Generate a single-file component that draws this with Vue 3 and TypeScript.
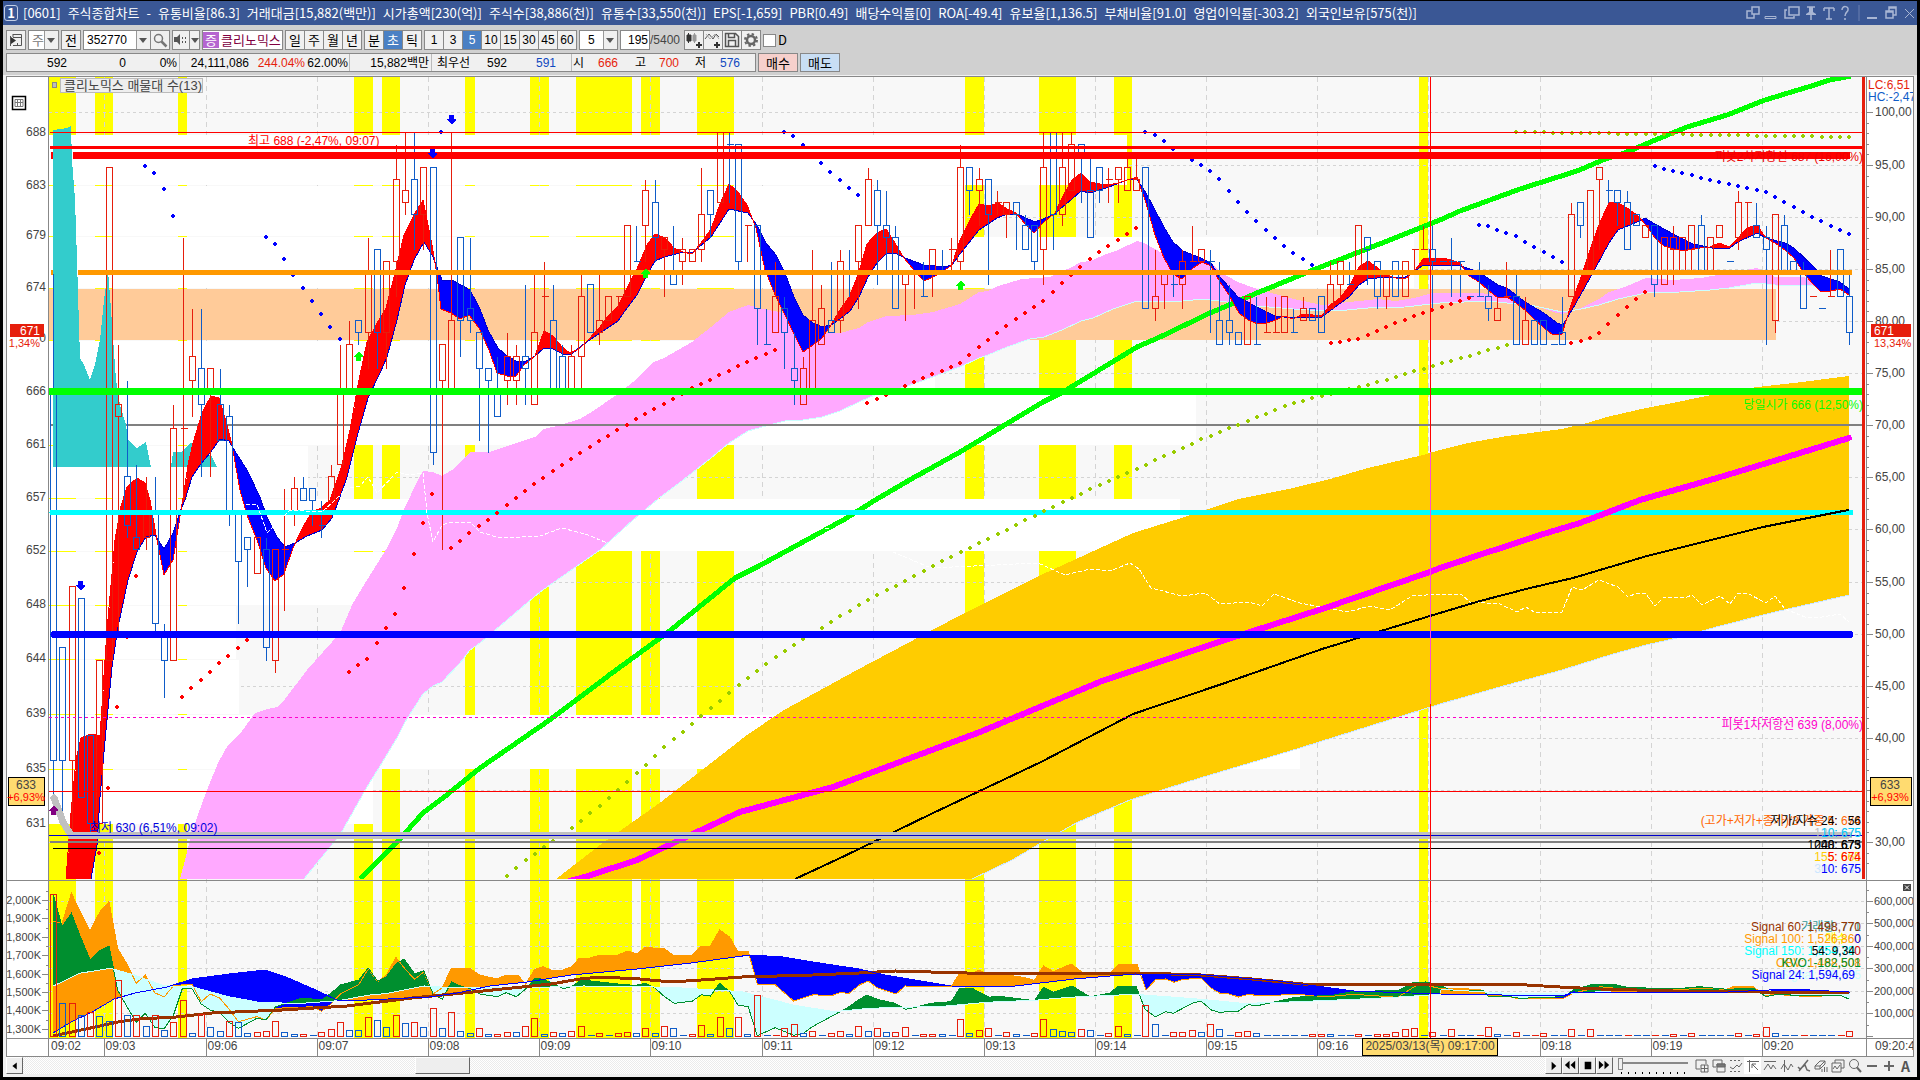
<script setup lang="ts">
import { ref } from 'vue'

type Pt = [number, number]

const code = ref('352770')
const adjust = ref('주')
const tick = ref('5')
const count = ref('195')
const dayOnly = ref(false)
const speed = ref(0)

const titleParts = ['[0601]', '주식종합차트', '-', '유통비율[86.3]', '거래대금[15,882(백만)]', '시가총액[230(억)]', '주식수[38,886(천)]', '유통수[33,550(천)]', 'EPS[-1,659]', 'PBR[0.49]', '배당수익률[0]', 'ROA[-49.4]', '유보율[1,136.5]', '부채비율[91.0]', '영업이익률[-303.2]', '외국인보유[575(천)]']
const periods = ['일', '주', '월', '년']
const units = ['분', '초', '틱']
const steps = ['1', '3', '5', '10', '15', '30', '45', '60']

/* ---- scales ---- */
const barX = (i: number) => 53.5 + 9.257 * i
const priceY = (p: number) => 132 + 7986 * Math.log(688 / p)
const r = (n: number) => Math.round(n)

/* "x,y x,y ..." to points, optionally scaled from a sheet's own units */
function pts(src: string, ox = 0, sx = 1, oy = 0, sy = 1): Pt[] {
  return src.trim().split(/\s+/).map((s) => {
    const [x, y] = s.split(',').map(Number)
    return [ox + x / sx, oy + y / sy] as Pt
  })
}
const str = (p: Pt[]) => p.map(([x, y]) => `${x.toFixed(1)},${y.toFixed(1)}`).join(' ')
function at(p: Pt[], x: number): number {
  if (x <= p[0][0]) return p[0][1]
  for (let i = 1; i < p.length; i++) {
    if (x <= p[i][0]) {
      const [x0, y0] = p[i - 1]
      const [x1, y1] = p[i]
      return y0 + ((y1 - y0) * (x - x0)) / (x1 - x0 || 1)
    }
  }
  return p[p.length - 1][1]
}
/* area between two lines: `up` where a is above b, `down` where it is below */
function between(a: Pt[], b: Pt[], from: number, to: number) {
  const out = { up: '', down: '' }
  for (let x = from; x < to; x++) {
    const ya = r(at(a, x))
    const yb = r(at(b, x))
    if (ya < yb) out.up += `M${x} ${ya}h1V${yb}h-1z`
    else if (yb < ya) out.down += `M${x} ${yb}h1V${ya}h-1z`
  }
  return out
}

/* ---- candles: colour + high top bottom low ---- */
const candleSrc = `B676 666 636 633,B645 645 636 631,R650 650 636 630,B649 649 633 633,B638 638 631 630,R644 644 631 631,R685 685 644 644,R670 665 664 646,B667 659 655 654,B660 654 653 653,
R659 656 654 653,B659 656 647 646,B647 646 644 641,R665 663 644 644,R679 663 663 657,R673 669 667 664,B673 668 665 659,R668 668 666 659,B668 665 662 662,B665 664 656 655,
B656 656 652 647,B654 654 653 650,R654 654 651 651,B654 653 645 644,R653 653 644 643,R658 653 653 648,R659 658 656 655,B659 658 657 657,B658 658 657 655,B657 655 655 654,
R660 659 657 657,R670 666 660 660,R672 670 666 666,B672 672 671 670,R679 676 671 668,B678 678 671 668,R677 677 671 668,R687 684 677 674,R688 683 682 681,B688 684 681 678,
R685 685 681 678,B685 685 661 660,R670 670 667 653,R688 672 666 666,B679 679 672 669,B679 673 672 671,B671 671 668 662,B668 668 667 661,B669 666 664 664,R671 669 667 665,
R670 669 667 665,B675 669 668 665,R676 671 665 665,R677 674 674 671,B675 672 666 666,B670 669 666 666,R670 669 666 666,R676 674 669 666,B675 675 671 671,R676 672 671 670,
R674 674 672 672,R674 674 674 673,R680 680 674 674,B680 677 677 677,R684 683 680 677,B684 682 679 677,R679 679 678 674,B680 676 675 675,R679 678 677 675,R678 678 677 677,
R685 681 678 677,B683 683 681 679,R688 688 682 682,B688 687 687 682,B687 687 677 676,R680 680 680 677,B680 680 673 670,B673 670 670 670,R677 674 671 671,B674 673 671 668,
B671 668 667 665,R669 668 665 665,R678 672 666 666,R675 673 670 670,B677 672 671 671,R678 677 672 671,B678 676 676 674,R680 680 677 673,R685 684 680 680,B684 683 680 675,
B683 680 679 676,B680 679 673 673,R676 676 675 672,R676 676 676 673,B677 674 674 674,R678 678 676 674,B678 676 676 676,R679 678 678 676,R687 685 677 676,B685 685 683 681,
R685 684 683 680,B684 684 681 675,R683 682 682 681,R682 682 681 679,B682 682 681 678,B681 680 678 678,B680 680 677 676,R688 685 678 675,B688 688 681 678,R688 685 681 680,
R688 687 683 683,B687 687 686 682,B686 683 679 679,B685 685 683 682,R685 684 684 682,R685 685 684 682,R686 685 683 683,R686 684 683 683,B685 685 673 673,R678 674 673 672,
R676 676 675 673,B676 675 675 674,R678 677 675 673,R680 677 677 677,R678 678 677 677,B678 677 677 671,B677 672 670 670,B675 672 671 670,B671 671 670 670,R674 674 670 670,
B674 670 670 670,R674 671 671 671,R674 671 671 671,R674 674 671 671,B673 671 671 671,R674 673 672 672,B673 673 672 672,B674 674 671 671,R677 675 673 673,R677 677 675 674,
B677 675 675 675,R680 680 676 676,B679 679 678 675,B677 677 674 673,R676 676 674 673,B677 677 674 674,R677 677 674 674,R678 678 678 676,R680 678 678 678,B680 678 677 673,
B677 677 677 677,B679 677 677 674,B677 677 677 674,B674 674 674 674,B677 674 674 674,B675 674 673 672,R674 673 672 672,R677 674 674 674,B676 674 670 670,R674 672 670 670,
B672 672 670 670,B672 672 670 670,B670 670 670 670,B674 671 670 670,R682 681 674 674,B682 682 680 679,R683 683 676 676,R685 685 684 678,B684 683 683 682,B683 683 682 680,
B683 682 678 678,B681 681 680 680,R680 680 679 679,B680 680 675 674,R679 679 675 675,R680 679 678 675,R679 679 676 676,R680 680 678 676,B681 680 676 676,R679 679 676 676,
R680 680 679 679,B677 677 677 677,R683 682 679 678,R682 682 682 679,B682 680 679 679,B680 679 678 670,R681 681 672 671,B681 680 676 676,B677 677 676 676,B677 676 673 673,
R674 674 674 674,B673 673 673 673,R678 674 674 674,B678 678 674 674,B676 674 671 670`
const candles = { R: '', B: '' }
candleSrc.split(',').forEach((s, i) => {
  const t = s.trim()
  const key = t[0] as 'R' | 'B'
  const [h, a, b, l] = t.slice(1).split(' ').map((n) => r(priceY(Number(n))) + 0.5)
  const x = Math.floor(barX(i)) + 0.5
  let d = ''
  if (h < a) d += `M${x} ${h}V${a}`
  if (a === b) d += `M${x - 3} ${a}h7`
  else d += `M${x - 3} ${a}h6V${b}h-6z`
  if (l > b) d += `M${x} ${b}V${l}`
  candles[key] += d
})

/* ---- moving averages ---- */
const fast = pts(`66,879 71,813 76,760 81,738 91,734 100,736 107,630 115,540 121,506 127,487 137,478 145,483 150,500 156,535 164,575 173,560 181,510 184,492 188,465 193,443 202,413 211,396 219,398 227,425 232,445 240,490 247,515 257,540 266,568 275,581 284,574 293,548 303,527 312,512 321,508 330,500 337,480 342,465 350,430 358,385 367,342 376,325 386,308 395,273 404,235 414,215 423,200 432,245 437,275 441,309 451,313 460,319 469,315 479,328 489,350 497,373 507,376 516,376 524,365 535,356 544,331 553,336 562,347 570,353 579,349 588,340 600,327 609,315 618,306 628,286 637,269 647,245 655,234 665,238 674,248 683,252 692,254 701,243 711,229 720,204 729,184 738,192 747,205 756,228 765,270 776,297 785,315 794,334 803,352 813,345 822,338 831,325 840,310 849,297 858,275 867,244 877,233 886,229 895,243 904,258 914,270 924,281 933,277 942,272 952,265 960,240 970,220 979,204 989,206 998,203 1007,209 1016,213 1026,225 1034,233 1044,222 1055,213 1063,196 1072,180 1081,173 1090,182 1100,184 1109,185 1118,183 1127,180 1137,177 1146,203 1155,235 1164,258 1173,274 1182,279 1193,268 1202,262 1211,266 1220,282 1229,295 1239,313 1248,320 1258,324 1267,323 1276,320 1284,316 1293,319 1303,314 1313,315 1322,316 1330,305 1340,298 1350,285 1359,267 1368,261 1378,268 1387,275 1396,278 1405,279 1414,272 1423,259 1433,258 1442,258 1451,260 1460,263 1469,276 1479,282 1488,290 1498,298 1507,297 1516,303 1526,311 1535,320 1544,328 1553,335 1562,334 1571,305 1580,280 1590,250 1600,222 1609,203 1617,202 1627,208 1637,215 1646,225 1655,238 1664,246 1674,249 1683,251 1692,249 1700,248 1710,247 1719,243 1729,247 1738,238 1747,228 1757,225 1766,238 1775,243 1785,250 1794,258 1803,272 1812,283 1821,292 1831,291 1840,289 1849,295`)
const slow = pts(`91,879 97,845 100,797 106,730 112,667 118,627 128,580 137,552 146,537 155,535 164,549 173,533 181,509 185,500 192,477 200,465 210,453 220,439 229,441 233,448 247,470 260,497 267,517 277,537 285,547 295,543 307,536 322,530 332,518 340,497 347,477 357,437 368,398 380,373 387,357 397,320 405,285 414,260 424,242 433,257 442,280 452,280 470,290 480,309 488,330 498,348 507,356 516,361 526,361 535,356 544,348 553,349 563,354 572,354 581,346 600,333 618,321 627,308 637,295 646,277 655,261 664,257 680,253 693,252 711,237 720,223 729,209 748,213 757,225 766,243 776,255 785,273 794,297 803,315 813,323 822,327 831,325 840,319 850,311 859,297 868,277 877,263 887,253 897,254 905,258 924,265 945,267 952,265 960,254 979,230 997,218 1007,214 1017,214 1035,222 1053,215 1072,199 1081,191 1090,193 1109,187 1127,180 1137,179 1146,193 1164,227 1173,242 1183,251 1201,258 1211,263 1220,277 1238,297 1257,307 1275,316 1294,318 1322,317 1331,310 1349,297 1359,285 1368,279 1387,277 1405,277 1414,272 1423,265 1440,265 1461,266 1479,272 1498,285 1507,288 1525,302 1544,313 1557,323 1563,325 1572,310 1590,278 1609,243 1618,230 1637,222 1645,218 1655,224 1673,234 1693,244 1712,248 1730,248 1738,242 1757,233 1766,238 1785,243 1794,248 1812,265 1822,276 1840,282 1849,289`)
const slowFill: Pt[] = [[66, 879], ...slow]
const ribbon = between(fast, slowFill, 66, 1850)

/* ---- bands ---- */
const pinkTop = pts(`180,879 192,833 197,817 207,790 218,763 228,745 240,734 255,713 267,709 277,707 285,699 307,670 340,633 353,603 367,580 387,548 397,528 405,507 418,480 423,471 433,472 442,476 452,470 470,452 490,452 507,446 535,437 544,429 557,426 580,419 590,413 618,394 633,382 654,362 664,358 692,342 711,327 729,312 748,305 763,309 785,313 803,327 813,332 831,333 840,333 859,328 868,322 887,316 913,315 933,312 960,304 979,292 988,291 998,286 1022,279 1050,277 1072,267 1081,262 1090,261 1109,253 1118,250 1137,241 1146,244 1164,254 1183,259 1211,263 1220,272 1238,282 1257,289 1275,294 1294,299 1322,305 1359,301 1377,299 1396,301 1414,298 1433,293 1461,293 1507,294 1516,300 1535,306 1553,312 1562,314 1581,308 1599,299 1609,292 1627,286 1646,278 1673,280 1701,278 1729,273 1757,268 1775,277 1803,277 1822,282 1840,284 1849,290`)
const pinkLow = pts(`304,879 340,835 367,787 382,763 397,738 405,722 423,694 433,686 442,682 460,663 470,650 480,643 540,592 600,550 633,520 658,499 687,477 711,458 729,443 748,431 766,426 785,421 803,420 822,417 840,411 859,402 877,394 905,387 933,377 960,367 979,358 988,355 1007,347 1030,339 1044,337 1062,330 1081,321 1093,318 1113,309 1137,301 1183,301 1203,299 1227,302 1257,306 1293,309 1327,311 1347,310 1368,308 1405,307 1440,303 1488,301 1507,303 1525,304 1544,308 1562,312 1581,309 1599,305 1618,299 1646,293 1680,292 1710,290 1729,288 1757,283 1775,285 1813,286 1849,288`)
const goldTop = pts(`556,879 600,845 661,802 747,735 784,710 857,670 955,618 1041,575 1133,533 1175,520 1239,499 1293,488 1330,479 1368,468 1423,455 1440,450 1468,443 1507,436 1562,429 1587,423 1607,417 1646,408 1673,403 1701,397 1757,387 1794,383 1849,376`)
const goldLow = pts(`972,879 1012,860 1053,836 1078,822 1130,800 1200,778 1300,748 1370,726 1440,704 1507,685 1562,670 1613,654 1646,645 1677,638 1720,626 1775,612 1849,595`)
const poly = (a: Pt[], b: Pt[]) => str([...a, ...[...b].reverse()])

const green = `360,879 397,842 423,813 443,798 480,768 551,719 612,673 667,633 735,578 759,566 845,519 877,499 913,478 933,467 960,452 1043,402 1063,392 1137,347 1160,337 1210,313 1257,293 1313,270 1377,245 1440,220 1460,211 1520,189 1577,171 1603,160 1627,152 1653,141 1687,127 1727,115 1765,100 1808,87 1830,80 1851,76`
const magenta = `570,881 588,876 637,860 740,812 833,787 980,732 1102,681 1225,640 1322,609 1430,572 1440,568 1540,535 1580,523 1640,500 1717,478 1787,457 1849,438`
const black = `795,879 836,860 857,850 931,814 1041,762 1133,714 1225,683 1322,649 1430,616 1440,613 1480,601 1530,588 1573,578 1647,556 1683,547 1763,527 1843,511 1849,510`
const whiteDash = `240,505 257,504 267,533 290,510 322,512 348,488 360,486 368,477 377,493 397,472 408,475 423,473 427,513 433,542 442,525 452,522 470,522 480,532 500,538 540,536 562,528 588,535 612,545 649,529 735,519 841,530 931,568 1038,563 1065,575 1090,569 1110,571 1130,563 1139,569 1151,588 1182,596 1205,593 1220,604 1249,602 1262,606 1274,594 1300,603 1347,612 1370,606 1390,610 1412,596 1440,594 1461,594 1470,602 1500,604 1517,612 1526,607 1534,612 1562,612 1572,587 1582,590 1599,580 1618,587 1628,597 1637,593 1646,594 1655,606 1664,597 1687,597 1692,595 1702,605 1720,596 1730,604 1738,593 1747,593 1766,603 1775,596 1785,609 1805,617 1822,617 1840,614 1849,622`
const teal1 = `53,467 53,130 67,128 71,126 72,160 75,200 77,260 80,358 84,365 90,380 95,365 100,340 104,300 108,270 111,310 116,380 120,405 126,425 128,440 137,448 146,442 151,467`
const teal2 = `171,467 173,452 181,452 191,442 203,455 211,455 217,467`

/* ---- stop-and-reverse dots ---- */
const blueDots = [
  ...pts(`435,198 462,219 492,267 519,348 798,411 825,432 852,477 879,525 909,564 936,603 963,642 990,681 1020,717 1323,96`, 0, 3, 100, 3),
  ...pts(`912,96 939,108 969,134 1023,189 1050,216 1080,240 1107,264 1134,285`, 480, 3, 100, 3),
  ...pts(`555,96 585,105 612,123 639,146 696,180 723,195 750,213 777,237 807,273 834,306 861,336 888,363 918,390 945,414 972,438 999,459 1029,477 1056,495`, 960, 3, 100, 3),
  ...pts(`117,375 144,378 171,390 198,399 228,408 255,426 282,441 312,456 339,471 366,486 645,198 672,207 699,213 726,219 756,225 783,234 810,240 837,246 867,252 894,258 921,264 951,270 978,276 1005,291 1032,306 1062,321 1089,336 1116,351 1143,363 1173,378 1200,390 1228,402`, 1440, 3, 100, 3)
]
const redDots = [
  ...pts(`297,1119 324,924 351,681 381,472 408,288 546,651 573,624 603,600 630,576 657,549 684,528 714,504 741,480 1047,576 1074,555 1101,537 1131,489 1158,444 1185,402 1212,324 1242,222 1269,129 1296,42 1353,204 1380,183 1407,159 1437,138 1464,120 1491,98 1521,76`, 0, 3, 480, 3),
  ...pts(`108,1194 135,1173 162,1152 189,1134 219,1113 246,1095 273,1077 300,1059 330,1041 357,1023 384,1008 411,990 441,975 468,957 495,942 522,927 552,912 579,897 607,882 636,864 663,852 690,840 717,825 747,813 774,798 801,786 828,774 858,762 885,750 1161,909 1191,897 1218,884 1275,858 1302,846 1329,834 1356,822 1386,813 1413,801 1440,789`, 480, 3, 100, 3),
  ...pts(`27,765 57,741 84,720 111,699 138,678 168,657 195,639 222,621 249,603 279,576 306,549 333,525 360,501 390,477 417,456 444,438 474,420 501,402 528,384 1113,729 1140,726 1167,720 1194,717 1224,705 1251,693 1278,681 1305,669 1335,660 1362,648 1389,639 1416,630`, 960, 3, 100, 3),
  ...pts(`6,621 33,612 60,603 87,594 393,729 423,723 450,714 477,699 504,672 534,645 561,621 588,597 615,576`, 1440, 3, 100, 3)
]
const oliveLine = pts(`506,877 525,860 563,835 612,796 667,745 735,688 784,651 857,606 931,567 1071,498 1136,469 1200,440 1293,403 1368,385 1433,366 1507,345`)
const oliveTop = pts(`1516,132 1650,134 1849,137`)
const oliveDots: Pt[] = []
for (let i = 49; i < 195; i++) {
  const x = barX(i)
  oliveDots.push([x, x < 1511 ? at(oliveLine, x) : at(oliveTop, x)])
}
const dots = (p: Pt[]) =>
  p.map(([x, y]) => `M${r(x) - 1} ${r(y) - 2}h2v1h1v2h-1v1h-2v-1h-1v-2h1z`).join('')

/* ---- background ---- */
const stripes = [[49, 27], [95, 18], [178, 9], [354, 19], [382, 18], [465, 10], [530, 19], [576, 56], [641, 19], [697, 37], [965, 19], [1039, 37], [1114, 18], [1419, 9]]
const gridX = [104.5, 206.5, 317.5, 428.5, 539.5, 650.5, 762.5, 873.5, 984.5, 1095.5, 1206.5, 1317.5, 1428.5, 1540.5, 1651.5, 1762.5]
const gridY = [112.5, 165.5, 217.5, 269.5, 321.5, 373.5, 425.5, 477.5, 529.5, 582.5, 634.5, 686.5, 738.5, 790.5, 842.5]
const subGridY = [901.5, 923.5, 946.5, 968.5, 991.5, 1013.5]
const profile = [
  { y: 135, h: 50, to: 1127 }, { y: 186, h: 50, to: 962 }, { y: 237, h: 51, to: 1414 },
  { y: 289, h: 51, to: 1776, peak: true }, { y: 341, h: 50, to: 935 }, { y: 392, h: 53, to: 1196 },
  { y: 446, h: 52, to: 308 }, { y: 499, h: 52, to: 1180 }, { y: 552, h: 53, to: 400 },
  { y: 606, h: 53, to: 236 }, { y: 660, h: 54, to: 239 }, { y: 715, h: 54, to: 1300 }, { y: 770, h: 54, to: 373 }
]
const priceLabels = [[688, 131], [683, 184], [679, 234], [674, 286], [666, 390], [661, 443], [657, 496], [652, 549], [648, 603], [644, 657], [639, 712], [635, 767], [631, 822]]
const pctLabels = gridY.map((y, i) => ({ y, t: `${100 - i * 5},00` })).filter((l) => l.t !== '35,00')
const minor = gridY.flatMap((y) => [1, 2, 3, 4].map((k) => r(y + k * 10.4) + 0.5)).filter((y) => y < 870)
const volLabels = ['600,000', '500,000', '400,000', '300,000', '200,000', '100,000']
const obvLabels = [['2,000K', 900], ['1,900K', 918], ['1,800K', 937], ['1,700K', 955], ['1,600K', 974], ['1,500K', 992], ['1,400K', 1010], ['1,300K', 1029]] as [string, number][]
const times = ['09:03', '09:06', '09:07', '09:08', '09:09', '09:10', '09:11', '09:12', '09:13', '09:14', '09:15', '09:16', '', '09:18', '09:19', '09:20']

/* ---- volume: colour + height in thirds of a pixel ---- */
const volSrc = `R427 B100 R100 B64 R73 B61 B44 R169 B64 R64 B31 R64 B19 R43 R109 B10 R67 B28 B16 R46 B43 B10 R13 R16 R46 B13 B7 R7 B4 R13 R22 R43 B19 B19 R58 B49 B28 R64 B40 R43 B28 R85 B25 R73 B16 B10 R25 B7 R7 R13 B13 R31 R55 B7 R13 B10 R16 R31 B2 R10 B2 R10 R13 B10
R25 B10 R31 B25 B4 R7 R34 B7 R58 B25 R58 B7 R123 B4 R4 R25 R37 B10 R16 B4 R10 R16 B7 R31 B16 R25 B13 R13 R28 B2 R7 R7 B7 B4 R52 B10 R19 R25 B4 R13 B7 B4 R10 R52 B22 B16 B13 R22 B19 B4 R10 R31 B7 B4 R94 B37 B4 R13 R13 R19 B13 R37 B22 B4 R13 R16 B10
B3 B3 B2 B2 B2 R7 R7 B7 B2 B2 R7 B4 R7 R7 R13 R22 R25 B2 R13 B2 R22 B2 B2 R3 R28 B7 B4 R13 B3 R4 R10 B3 B3 R22 B3 R22 B3 B3 B3 R3 B2 B2 R3 B3 R7 B2 R10 B2 B2 B2 B2 R10 B2 R7 R28 B10 B3 B3 R3 B3 B2 B2 R3 R16`
const volume = { R: '', B: '' }
volSrc.trim().split(/\s+/).forEach((s, i) => {
  const key = s[0] as 'R' | 'B'
  const h = Math.max(0, r(Number(s.slice(1)) / 3))
  const x = Math.floor(barX(i)) - 2.5
  volume[key] += h < 2 ? `M${x} 1035.5h7` : `M${x} 1036.5v${-h}h6v${h}z`
})

/* ---- lower indicators ---- */
const A = (s: string) => pts(s, 0, 2.45, 860, 3)
const B = (s: string) => pts(s, 640, 1.96, 860, 3)
const C = (s: string) => pts(s, 1440, 3, 780, 3)
const brown = pts(`53,1036 86,1029 118,1022 139,1019 176,1017 212,1013 282,1010 347,1006 412,998 473,992 522,987 551,984 580,979 600,977 640,979 671,982 701,980 742,977 813,975 859,973 895,971 967,973 1140,973 1201,975 1252,979 1303,984 1440,984 1510,984 1560,987 1600,989 1673,991 1760,992 1849,993`)
const navy = pts(`53,1033 71,1022 94,1011 114,999 135,993 167,987 192,979 229,974 265,970 286,977 318,991 339,1001 367,1000 429,997 457,993 490,986 527,982 571,975 637,969 691,963 750,955 783,957 813,962 859,969 885,975 951,986 1007,987 1074,979 1135,974 1206,975 1278,981 1354,991 1440,994 1563,996 1573,992 1707,993 1790,989 1849,992`)
const obv = [
  ...A(`131,184 152,190 175,100 197,155 221,213 245,155 267,125 288,265 311,312 334,370 356,344 379,398 402,411 425,377 470,372 493,425 515,402 538,414 561,447 584,485 629,470 652,480 675,445 766,440 788,454 811,432 834,402 879,374 902,326 925,365 947,345 970,292 993,328 1016,358 1038,336 1061,402 1084,383 1106,324 1150,324 1175,345 1218,357 1240,345 1268,345 1288,372 1310,328 1330,320 1355,332 1375,332 1400,320 1420,294 1445,294 1470,285 1515,285 1537,273 1560,282`),
  ...B(`10,262 48,267 67,287 103,285 120,258 138,258 156,210 176,232 192,276 212,274 230,373 265,374 301,423 340,404 374,408 392,398 410,400 430,375 447,363 465,383 502,402 520,378 610,380 627,338 647,343 665,330 684,347 720,345 755,353 773,361 791,318 810,335 845,312 865,335 882,345 920,340 940,312 974,312 992,390 1010,360 1030,357 1047,367 1065,358 1100,355 1120,385 1137,400 1155,402 1173,411 1195,402 1210,408 1290,403 1340,411 1400,403 1485,412 1520,378 1540,376 1567,385`),
  ...C(`4,625 120,628 140,645 200,648 230,655 370,655 400,640 480,620 560,628 700,630 780,625 860,628 880,620 940,620 975,648 1000,643 1110,650 1200,645 1228,658`)
]
const kvo = [
  ...A(`131,105 152,200 175,160 197,230 221,300 245,272 267,258 288,390 311,440 334,487 356,460 379,502 402,506 425,465 447,385 470,385 493,432 515,450 538,458 561,487 584,505 607,490 629,475 652,479 675,440 740,414 788,420 811,400 834,375 879,360 902,324 925,363 947,350 970,312 990,297 1016,342 1038,332 1061,402 1084,418 1106,366 1128,378 1150,385 1175,402 1218,410 1240,398 1265,410 1290,385 1310,355 1330,358 1355,370 1380,386 1400,380 1425,360 1515,372 1537,372 1550,378`),
  ...B(`10,370 30,385 48,410 67,430 103,423 120,404 138,408 156,370 176,395 192,435 212,440 230,527 265,503 301,526 320,520 338,500 392,455 410,440 430,418 445,405 465,418 500,430 520,448 540,442 570,430 610,425 627,384 650,384 684,412 700,408 773,422 791,382 810,397 848,378 865,395 882,410 920,400 938,378 972,378 990,448 1010,470 1030,455 1045,460 1085,428 1100,424 1120,450 1137,458 1155,453 1173,453 1192,434 1210,437 1285,412 1360,405 1400,394 1485,392 1515,368 1540,366 1567,375`),
  ...C(`30,630 130,630 145,650 210,650 240,655 370,650 400,630 460,612 520,612 560,622 700,627 780,620 860,628 940,625 978,650 1010,643 1110,648 1200,645 1228,658`)
]
const sig = [
  ...A(`131,378 195,340 270,325 330,345 400,377 470,380 500,390 560,410 640,428 740,430 830,422 900,406 950,400 1040,378 1090,382 1290,383 1430,378 1560,380`),
  ...B(`60,382 200,395 300,435 380,455 450,445 600,438 680,427 780,420 840,412 970,403 1100,418 1180,430 1240,428 1400,418 1480,412 1567,403`),
  ...C(`4,628 200,640 370,642 560,630 960,632 1228,640`)
]
const obvFill = between(obv, navy, 53, 1850)
const kvoFill = between(kvo, sig, 53, 1850)

const down = (x: number, y: number) => `M${x - 2} ${y - 4}h5v4h2v1l-4 4h-1l-4 -4v-1h2z`
const up = (x: number, y: number) => `M${x - 2} ${y + 5}h5v-4h2v-1l-4 -4h-1l-4 4v1h2z`
</script>

<template>
  <div class="window">
    <header class="titlebar">
      <span class="badge">1</span>
      <h1><span v-for="t in titleParts" :key="t">{{ t }}</span></h1>
      <svg class="wicons" viewBox="0 0 172 16" width="172" height="16" fill="none" stroke="#a9b6d4" stroke-width="1.5">
        <path d="M6 6H2v7h7V9M7 2h7v7H7z" />
        <path d="M20 11.500h11v2H20z" stroke-width="1" />
        <path d="M44 2h10v8H44zM42 5h-2v8h9v-2" />
        <path d="M62 2h8M66 9v6" /><path d="M64 2h4v5l3 2v1H61V9l3-2z" fill="#a9b6d4" stroke="none" />
        <path d="M79 3h10M84 3v11M79 3v3M89 3v3M81 14h6" />
        <path d="M97 5c0-5 7-4 6 0c0 2-3 2-3 6M100 13v2" />
        <path d="M114 0v16" stroke="#6b80b1" stroke-width="1" />
        <path d="M122 13h10" stroke-width="2" />
        <path d="M141 6h7v7h-7zM144 6V2h7v8h-3M141 7h7M144 3h7" />
        <path d="M160 4l9 9M169 4l-9 9" stroke-width="1" />
      </svg>
    </header>

    <div class="toolbar">
      <button class="tb" aria-label="목록"><svg viewBox="0 0 16 16" width="16" height="16"><path d="M5 2.500h8.500v11H5M5 5.500h8M5 2v3M9.500 11v3M2.500 4v10" fill="none" stroke="#555" /><path d="M3 5l5 3.500l-5 3.500z" fill="#333" /></svg></button>
      <label class="drop w31"><select v-model="adjust" class="dim" aria-label="수정주가"><option>주</option></select></label>
      <button class="tb">전</button>
      <div class="group">
        <label class="drop w68"><input v-model="code" aria-label="종목코드"></label>
        <button class="tb" aria-label="검색"><svg viewBox="0 0 16 16" width="16" height="16" fill="none" stroke="#777" stroke-width="1.500"><circle cx="6.500" cy="6.500" r="4" /><path d="M9.500 9.500l5 5" stroke-width="2.500" /></svg></button>
      </div>
      <div class="group">
        <button class="tb w17" aria-label="음성"><svg viewBox="0 0 16 16" width="16" height="16" fill="#555"><path d="M1 5h3l3-3v11l-3-3H1z" /><path d="M9 5h1v2H9zM9 9h1v2H9zM12 5h1v2h-1zM12 9h1v2h-1z" /></svg></button>
        <button class="tb w10" aria-label="음성 설정"><i class="tri"></i></button>
      </div>
      <div class="stock"><b>증</b><span>클리노믹스</span></div>
      <div class="group"><button v-for="p in periods" :key="p" class="tb">{{ p }}</button></div>
      <div class="group"><button v-for="u in units" :key="u" class="tb" :class="{ on: u === '초' }">{{ u }}</button></div>
      <div class="group num"><button v-for="s in steps" :key="s" class="tb" :class="{ on: s === '5' }">{{ s }}</button></div>
      <label class="drop w38"><select v-model="tick" aria-label="주기"><option>5</option></select></label>
      <div class="count"><input v-model="count" aria-label="조회 개수"><span>/5400</span></div>
      <div class="group">
        <button class="tb" aria-label="봉 추가"><svg viewBox="0 0 18 18" width="18" height="18"><path d="M2 4h4v6H2zM3.500 2v10" fill="#333" stroke="#333" /><path d="M8 4h3v6H8zM9.500 2v10" fill="#999" stroke="#999" /><path d="M11 14h6M14 11v6" stroke="#333" stroke-width="2" /></svg></button>
        <button class="tb" aria-label="지표 추가"><svg viewBox="0 0 18 18" width="18" height="18" fill="none"><path d="M1 8l4-5l4 5l3-5l3 3" stroke="#555" /><path d="M2 3l4 5l5-5l4 5" stroke="#aaa" /><path d="M10 14h6M13 11v6" stroke="#333" stroke-width="2" /></svg></button>
        <button class="tb" aria-label="저장"><svg viewBox="0 0 18 18" width="18" height="18" fill="none" stroke="#555" stroke-width="1.500"><path d="M2.500 2.500h10l3 3v10h-13zM5.500 2.500v4h6v-4M5.500 15.500v-6h7v6" /></svg></button>
        <button class="tb" aria-label="설정"><svg viewBox="0 0 18 18" width="18" height="18" fill="none" stroke="#666"><circle cx="9" cy="9" r="4" stroke-width="2.500" /><circle cx="9" cy="9" r="6" stroke-width="2" stroke-dasharray="2.400 2.300" /></svg></button>
      </div>
      <label class="check"><input v-model="dayOnly" type="checkbox">D</label>
    </div>

    <div class="quote">
      <div class="quotebox">
        <div class="q q1"><span>592</span><span>0</span><span>0%</span></div>
        <div class="q q2"><span>24,111,086</span><span class="red">244.04%</span><span>62.00%</span></div>
        <div class="q q3"><span>15,882백만</span></div>
        <div class="q q4"><span>최우선</span><span>592</span><span class="blue">591</span></div>
        <div class="q q5"><span>시</span><span class="red">666</span><span>고</span><span class="red">700</span><span>저</span><span class="blue">576</span></div>
      </div>
      <button class="buy">매수</button>
      <button class="sell">매도</button>
    </div>

    <main class="chart">
      <svg viewBox="6 76 1908 981">
        <defs>
          <clipPath id="plot"><rect x="49" y="77" width="1816" height="802" /></clipPath>
          <clipPath id="low"><rect x="49" y="881" width="1816" height="157" /></clipPath>
          <clipPath id="frame"><rect x="7" y="77" width="1906" height="979" /></clipPath>
        </defs>
        <rect x="6" y="76" width="1908" height="981" fill="#fff" />
        <g shape-rendering="crispEdges">
          <rect x="49" y="77" width="1817" height="961" fill="#f8f8f8" />
          <rect v-for="s in stripes" :key="s[0]" :x="s[0]" y="77" :width="s[1]" height="961" fill="#ff0" />
          <g stroke="#d4d4d4" stroke-dasharray="5 4">
            <path v-for="x in gridX" :key="x" :d="`M${x} 77V1038`" />
            <path v-for="y in gridY" :key="y" :d="`M49 ${y}H1866`" stroke-dasharray="3 3" />
            <path v-for="y in subGridY" :key="y" :d="`M49 ${y}H1866`" stroke-dasharray="3 3" />
          </g>
          <rect v-for="b in profile" :key="b.y" x="49" :y="b.y" :width="b.to - 49" :height="b.h" :fill="b.peak ? '#ffcb99' : '#fff'" />

          <g clip-path="url(#plot)" fill="none">
            <polygon :points="poly(pinkTop, pinkLow)" fill="#ffa9ff" />
            <polyline :points="str(pinkLow)" stroke="#ccffff" />
            <polygon :points="poly(goldTop, goldLow)" fill="#ffcc00" />
            <polyline :points="str(goldLow)" stroke="#cce6ff" />
            <path d="M50 425H1866" stroke="#808080" stroke-width="2" />
            <polygon :points="teal1" fill="#33cccc" /><polygon :points="teal2" fill="#33cccc" />
            <polyline :points="green" stroke="#0f0" stroke-width="5" />
            <path :d="ribbon.up" fill="#f00" /><path :d="ribbon.down" fill="#00f" />
            <polyline :points="str(slow)" stroke="#00c" /><polyline :points="str(fast)" stroke="#f00" />
            <path :d="candles.R" stroke="#e61e0c" /><path :d="candles.B" stroke="#0f5cc8" />
            <path d="M52 512.500H1851" stroke="#0ff" stroke-width="5" stroke-linecap="round" />
            <polyline :points="whiteDash" stroke="#fff" stroke-dasharray="4 2" />
            <polyline :points="black" stroke="#000" stroke-width="2" />
            <polyline :points="magenta" stroke="#f0f" stroke-width="6" stroke-linecap="round" />
            <path :d="dots(blueDots)" fill="#00f" /><path :d="dots(redDots)" fill="#f00" /><path :d="dots(oliveDots)" fill="#9c0" />
            <path d="M50 132.500H1862" stroke="#f00" />
            <path d="M50 147.500H1862" stroke="#f00" stroke-width="3" />
            <path d="M73 155.500H1850M51 155.500h2" stroke="#f00" stroke-width="7" />
            <path d="M78 272.500H1852M51 272.500h2" stroke="#f90" stroke-width="5" />
            <path d="M49 391.500H1862" stroke="#0f0" stroke-width="7" />
            <path d="M54 634.500H1850" stroke="#00f" stroke-width="7" stroke-linecap="round" />
            <path d="M49 717.500H1862" stroke="#f0c" stroke-dasharray="3 3" />
            <path d="M49 791.500H1862" stroke="#f00" />
            <path d="M54 798L63 822L71 835H1849" stroke="#c0c0c0" stroke-width="7" stroke-linecap="round" />
            <path d="M49 835.500H1862" stroke="#00c" />
            <path d="M50 842H1862" stroke="#808080" stroke-width="2" />
            <path d="M53 848.500H1849" stroke="#000" />
            <path :d="down(451, 119) + down(432, 153) + down(80, 585)" fill="#00f" />
            <path :d="up(358, 356) + up(645, 273) + up(960, 285)" fill="#0f0" />
            <path :d="up(53, 810)" fill="#800080" />
          </g>

          <g clip-path="url(#low)" fill="none">
            <path :d="obvFill.up" fill="#ff9900" /><path :d="obvFill.down" fill="#00f" />
            <path :d="kvoFill.up" fill="#008f2f" /><path :d="kvoFill.down" fill="#ccffff" />
            <polyline :points="str(obv)" stroke="#ff9900" /><polyline :points="str(kvo)" stroke="#008f2f" />
            <polyline :points="str(sig)" stroke="#ccffff" />
            <polyline :points="str(brown)" stroke="#993300" stroke-width="3" />
            <polyline :points="str(navy)" stroke="#00f" />
            <path :d="volume.R" stroke="#e61e0c" /><path :d="volume.B" stroke="#0f5cc8" />
          </g>

          <path d="M1430.500 77V1038" stroke="#f00" />
          <path d="M1430.500 452V704" stroke="#ff4dd2" />
          <path d="M1863.500 77V879" stroke="#e61e0c" stroke-width="3" />
          <path d="M6.500 1057V76.500H1913.500V1057M7 880.500H1913M7 1038.500H1913M7 1056.500H1913M48.500 77V1057M1866.500 77V1057" stroke="#888" fill="none" />
          <path v-for="x in gridX" :key="x" :d="`M${x} 1039V1056`" stroke="#888" />
          <path v-for="y in gridY" :key="y" :d="`M1867 ${y}h6`" stroke="#888" />
          <path v-for="y in minor" :key="y" :d="`M1867 ${y}h2`" stroke="#888" />
          <path v-for="y in subGridY" :key="y" :d="`M1867 ${y}h6M1867 ${y - 11}h2`" stroke="#888" />
          <path d="M1867 1025.500h2M1867 1036.500h6" stroke="#888" />
          <path v-for="l in obvLabels" :key="l[1]" :d="`M42 ${l[1] + 0.5}h6M46 ${l[1] - 8.5}h2`" stroke="#888" />
        </g>

        <g class="ink" clip-path="url(#frame)">
          <text v-for="l in priceLabels" :key="l[0]" x="46" :y="l[1] + 5" text-anchor="end">{{ l[0] }}</text>
          <text x="46" y="342" text-anchor="end">0</text>
          <text v-for="l in pctLabels" :key="l.t" x="1875" :y="l.y + 3">{{ l.t }}</text>
          <text x="51" y="1050">09:02</text>
          <text v-for="(t, i) in times" :key="i" :x="gridX[i] + 1" y="1050">{{ t }}</text>
          <text x="1875" y="1050">09:20:4</text>
          <g class="small">
            <text v-for="(l, i) in volLabels" :key="l" x="1874" :y="subGridY[i] + 3">{{ l }}</text>
            <text v-for="l in obvLabels" :key="l[0]" x="41" :y="l[1] + 4" text-anchor="end">{{ l[0] }}</text>
          </g>
          <text x="1868" y="89" class="up">LC:6,51</text>
          <text x="1868" y="101" class="dn">HC:-2,47</text>
        </g>

        <rect x="60.500" y="78.500" width="142" height="14" fill="#eee" stroke="#bbb" />
        <text x="64" y="90" class="ink wide">클리노믹스 매물대 수(13)</text>
        <rect x="52.500" y="82.500" width="4" height="5" fill="#bbb" stroke="#888" />
        <path d="M12.500 96.500h13v13h-13z" fill="#fff" stroke="#000" stroke-width="1.500" />
        <path d="M15 99.500h8v7h-8zM15 102.500h8M17.500 99.500v7M20.500 99.500v7" fill="none" stroke="#777" />
        <rect x="1903" y="884" width="8" height="7" fill="#444" />
        <path d="M1905 885.500l4 4M1909 885.500l-4 4" stroke="#fff" />

        <rect x="10" y="324" width="34" height="13" fill="#e61e0c" />
        <text x="40" y="335" text-anchor="end" fill="#fff">671</text>
        <text x="40" y="347" text-anchor="end" class="up small">1,34%</text>
        <rect x="1871" y="324" width="40" height="13" fill="#e61e0c" />
        <text x="1874" y="335" fill="#fff">671</text>
        <text x="1874" y="347" class="up small">13,34%</text>
        <g shape-rendering="crispEdges" fill="#ffdb70" stroke="#000">
          <rect x="8.500" y="777.500" width="36" height="28" /><rect x="1870.500" y="777.500" width="41" height="28" />
          <rect x="1362.500" y="1038.500" width="135" height="17" />
        </g>
        <g class="ink" text-anchor="middle">
          <text x="26" y="789">633</text><text x="1890" y="789">633</text>
          <text x="1430" y="1050">2025/03/13(목) 09:17:00</text>
        </g>
        <g fill="#f00" text-anchor="middle" class="small"><text x="26" y="801">+6,93%</text><text x="1890" y="801">+6,93%</text></g>

        <text x="248" y="145" fill="#f00">최고 688 (-2,47%, 09:07)</text>
        <text x="90" y="832" fill="#00d">최저 630 (6,51%, 09:02)</text>
        <g text-anchor="end" clip-path="url(#plot)">
          <text x="1863" y="161" fill="#e00">피봇2차저항선 687 (16,00%)</text>
          <text x="1863" y="409" fill="#0f0">당일시가 666 (12,50%)</text>
          <text x="1863" y="729" fill="#f0c">피봇1차저항선 639 (8,00%)</text>
          <text x="1861" y="825" fill="#f60">(고가+저가+종가)/3 가중 5: 674</text>
          <text x="1861" y="825" fill="#000">저가/지수 24:&nbsp;&nbsp;&nbsp;56</text>
          <text x="1861" y="837" fill="#c0c0c0">120: 675</text><text x="1861" y="837" fill="#0cf">10: 675</text>
          <text x="1861" y="849" fill="#000">1000: 675</text><text x="1861" y="849" fill="#000">248: 673</text>
          <text x="1861" y="861" fill="#fc0">155: 665</text><text x="1861" y="861" fill="#f00">5: 674</text>
          <text x="1861" y="873" fill="#cce6ff">300: 645</text><text x="1861" y="873" fill="#00f">10: 675</text>
        </g>
        <g text-anchor="end">
          <text x="1861" y="931" fill="#399">거래량: 771</text><text x="1861" y="931" fill="#930">Signal 60: 1,498,770</text>
          <text x="1861" y="943" fill="#ff0">매수: 0</text><text x="1861" y="943" fill="#f90">Signal 100: 1,526,860</text><text x="1861" y="943" fill="#00f">0</text>
          <text x="1861" y="955" fill="#0ff">Signal 150: 1,554,790</text><text x="1855" y="955" fill="#000">54: 9,34</text><text x="1861" y="955" fill="#f00">0</text>
          <text x="1861" y="967" fill="#f90">OBV: 1,468,508</text><text x="1861" y="967" fill="#008f2f">KVO: -182,501</text>
          <text x="1861" y="979" fill="#cff">Signal: -55,695</text><text x="1855" y="979" fill="#00f">Signal 24: 1,594,69</text>
        </g>
      </svg>
    </main>

    <footer class="bottom">
      <button class="arrow" aria-label="왼쪽으로"><svg viewBox="0 0 16 16" width="14" height="14"><path d="M10 4v8l-5-4z" /></svg></button>
      <div class="track"><div class="thumb"></div></div>
      <div class="play">
        <button aria-label="재생"><svg viewBox="0 0 16 16" width="15" height="15"><path d="M6 4l5 4.500l-5 4.500z" /></svg></button>
        <button aria-label="뒤로"><svg viewBox="0 0 16 16" width="15" height="15"><path d="M7 3v9l-5-4.500zM13 3v9l-5-4.500z" /></svg></button>
        <button aria-label="정지"><svg viewBox="0 0 16 16" width="15" height="15"><path d="M5 4h7v8H5z" /></svg></button>
        <button aria-label="앞으로"><svg viewBox="0 0 16 16" width="15" height="15"><path d="M2 3v9l5-4.500zM8 3v9l5-4.500z" /></svg></button>
      </div>
      <label class="speed"><input v-model="speed" type="range" min="0" max="10" aria-label="재생 속도"></label>
      <div class="tools">
        <button aria-label="격자"><svg viewBox="0 0 16 16"><path d="M12 6V2H2v9h4M7 7h7v7H7zM10.500 7v7M7 10.500h7" /></svg></button>
        <button aria-label="창"><svg viewBox="0 0 16 16"><path d="M5 9H2V2h9v4M6 6h8v8H6z" /><path d="M6 6h8v3H6z" fill="#777" /></svg></button>
        <button aria-label="영역"><svg viewBox="0 0 16 16"><path d="M2 2.500h12M2 13.500h12" stroke-dasharray="2 2" /><path d="M2 9l3 2l4-4l2 2l3-4" /></svg></button>
        <button class="sel" aria-label="십자선"><svg viewBox="0 0 16 16"><path d="M2 3.500h12M4.500 2v12M7 6l6 6M7 6v4M7 6h4" /></svg></button>
        <button aria-label="추세"><svg viewBox="0 0 16 16"><path d="M2 3.500h12M2 12l4-6l3 5l2-4l3 4" /></svg></button>
        <button aria-label="수직선"><svg viewBox="0 0 16 16"><path d="M5.500 2v12M2 11l3-5l4 6l3-6l2 3" /></svg></button>
        <button aria-label="추세선"><svg viewBox="0 0 16 16"><path d="M3 13L12 2M2 9l2 2l5-4l2 5l3 1" stroke-width="1.500" /></svg></button>
        <button aria-label="지우개"><svg viewBox="0 0 16 16"><path d="M2 8l5-5h5v3l-5 5H2zM2 8h5l5-5M7 8v3M9 11v3M11.500 9v5M14 9v5" /></svg></button>
        <button aria-label="복사"><svg viewBox="0 0 16 16"><path d="M5 5V2h9v8h-3M2 5h9v9H2zM3 11l2-3l2 3l3-4" /></svg></button>
        <button aria-label="돋보기"><svg viewBox="0 0 16 16"><circle cx="7" cy="6" r="4.500" /><path d="M10 9.500l4 4.500" stroke-width="2" /></svg></button>
        <button aria-label="축소"><svg viewBox="0 0 16 16"><path d="M3 8h10" stroke-width="2" /></svg></button>
        <button aria-label="확대"><svg viewBox="0 0 16 16"><path d="M3 8h10M8 3v10" stroke-width="2" /></svg></button>
        <button class="auto">A</button>
      </div>
    </footer>
  </div>
</template>

<style>
body { background: #000; }
</style>

<style scoped>
* { box-sizing: border-box; }
.window {
  border: solid #000; border-width: 1px 3px 3px;
  background: #f0f0f0;
  font-family: "Noto Sans CJK KR", sans-serif;
  font-size: 13px; line-height: 16px; color: #000;
}
button, input, select { font: inherit; color: inherit; margin: 0; padding: 0; border: 0; border-radius: 0; background: none; }
.titlebar { display: flex; align-items: center; height: 24px; padding: 0 0 0 1px; background: #3a5795; color: #fff; }
.badge { width: 14px; height: 16px; margin-right: 5px; border: 1px solid #c4cfe6; border-radius: 3px; font-weight: bold; line-height: 14px; text-align: center; }
.titlebar h1 { flex: 1; display: flex; gap: 7px; margin: 0; font-size: 13px; font-weight: normal; white-space: nowrap; }
.wicons { flex: none; }
.toolbar { display: flex; gap: 2px; align-items: center; height: 28px; padding: 5px 3px 3px; background: #d0d0d0; }
.tb { display: flex; align-items: center; justify-content: center; width: 20px; height: 20px; border: 1px solid #888; background: #f0f0f0; }
.tb svg { display: block; flex: none; }
.num, .count, .w68, .w38 { font-family: "Liberation Sans", sans-serif; font-size: 12px; }
.group { display: flex; }
.group .tb + .tb, .group .drop + .tb { margin-left: -1px; }
.tb.on { background: #4a80c4; color: #fff; }
.tb.w17 { width: 18px; } .tb.w10 { width: 11px; }
.tri { border: 4px solid transparent; border-top: 5px solid #555; border-bottom: 0; }
.drop { position: relative; display: flex; height: 20px; border: 1px solid #888; background: #fff; }
.drop::after { content: ""; position: absolute; right: 3px; top: 7px; border: 4px solid transparent; border-top: 5px solid #555; border-bottom: 0; }
.drop select, .drop input { width: 100%; height: 18px; appearance: none; outline: 0; padding-left: 3px; background: linear-gradient(90deg, transparent calc(100% - 14px), #999 calc(100% - 14px), #999 calc(100% - 13px), #f0f0f0 calc(100% - 13px)); }
.dim { color: #777; }
.w31 { width: 31px; } .w68 { width: 68px; } .w38 { width: 39px; }
.w38 select { padding-left: 8px; }
.stock { display: flex; align-items: center; gap: 2px; width: 81px; height: 20px; border: 1px solid #888; background: #fff; color: #800040; white-space: nowrap; }
.stock b { width: 16px; background: #b565d0; color: #fff; font-weight: normal; text-align: center; }
.count { display: flex; align-items: center; width: 62px; color: #444; }
.count input { width: 30px; height: 20px; border: 1px solid #888; background: #fff; color: #000; text-align: right; padding-right: 1px; }
.check { display: flex; align-items: center; gap: 2px; }
.check input { appearance: none; width: 13px; height: 13px; border: 1px solid #888; background: #fff; }
.quote { display: flex; gap: 2px; height: 22px; padding: 0 3px 3px; background: #d0d0d0; }
.quotebox { display: flex; width: 750px; height: 19px; border: 1px solid #888; background: #f0f0f0; font-family: "Liberation Sans", "Noto Sans CJK KR", sans-serif; font-size: 12px; }
.q { display: grid; align-items: center; border-right: 1px solid #bbb; text-align: right; white-space: nowrap; }
.q:last-child { border: 0; }
.q1 { width: 173px; grid-template-columns: 60px 59px 51px; }
.q2 { width: 170px; grid-template-columns: 69px 56px 43px; }
.q3 { width: 82px; padding-right: 2px; }
.q4 { width: 140px; grid-template-columns: 38px 37px 49px; }
.q5 { width: 183px; grid-template-columns: 12px 34px 28px 33px 27px 34px; }
.red { color: #e61e0c; } .blue { color: #0f48c0; }
.buy, .sell { width: 40px; height: 19px; border: 1px solid #888; background: #f6d0cc; }
.sell { background: #c8def4; }
.chart { padding: 1px 3px 0; background: #f0f0f0; font-family: "Liberation Sans", "Noto Sans CJK KR", sans-serif; font-size: 12px; }
.chart svg { display: block; width: 100%; height: auto; }
.ink { fill: #444; } .up { fill: #e61e0c; } .dn { fill: #0f5cc8; }
.small { font-size: 11px; } .wide { font-size: 13px; }
.bottom { display: flex; height: 20px; padding: 0 3px 3px; background: #f0f0f0; }
.arrow, .play button, .thumb { border: 1px solid; border-color: #fff #666 #666 #fff; background: #eee; }
.arrow { width: 17px; height: 17px; display: flex; align-items: center; justify-content: center; }
.track { flex: 1; padding-left: 392px; background: repeating-conic-gradient(#fff 0 25%, #ebebeb 0 50%) 0 0 / 2px 2px; }
.thumb { width: 55px; height: 17px; }
.play { display: flex; }
.play button { width: 17px; height: 17px; display: flex; align-items: center; justify-content: center; }
.speed { width: 80px; padding: 0 5px; background: repeating-linear-gradient(90deg, #000 0 1px, transparent 1px 7px) 8px 15px / 68px 2px no-repeat; }
.speed input { display: block; width: 70px; height: 12px; margin-top: 1px; appearance: none; background: linear-gradient(#888, #888) 0 4px / 100% 2px no-repeat; }
.speed input::-webkit-slider-thumb { appearance: none; width: 5px; height: 12px; border: 1px solid #888; background: #f0f0f0; }
.tools { display: flex; }
.tools button { width: 17px; height: 17px; display: flex; align-items: center; justify-content: center; color: #555; }
.tools svg { width: 16px; height: 16px; fill: none; stroke: #666; }
.tools .sel { background: #fff; }
.tools .auto { font-weight: bold; font-size: 14px; }
</style>
